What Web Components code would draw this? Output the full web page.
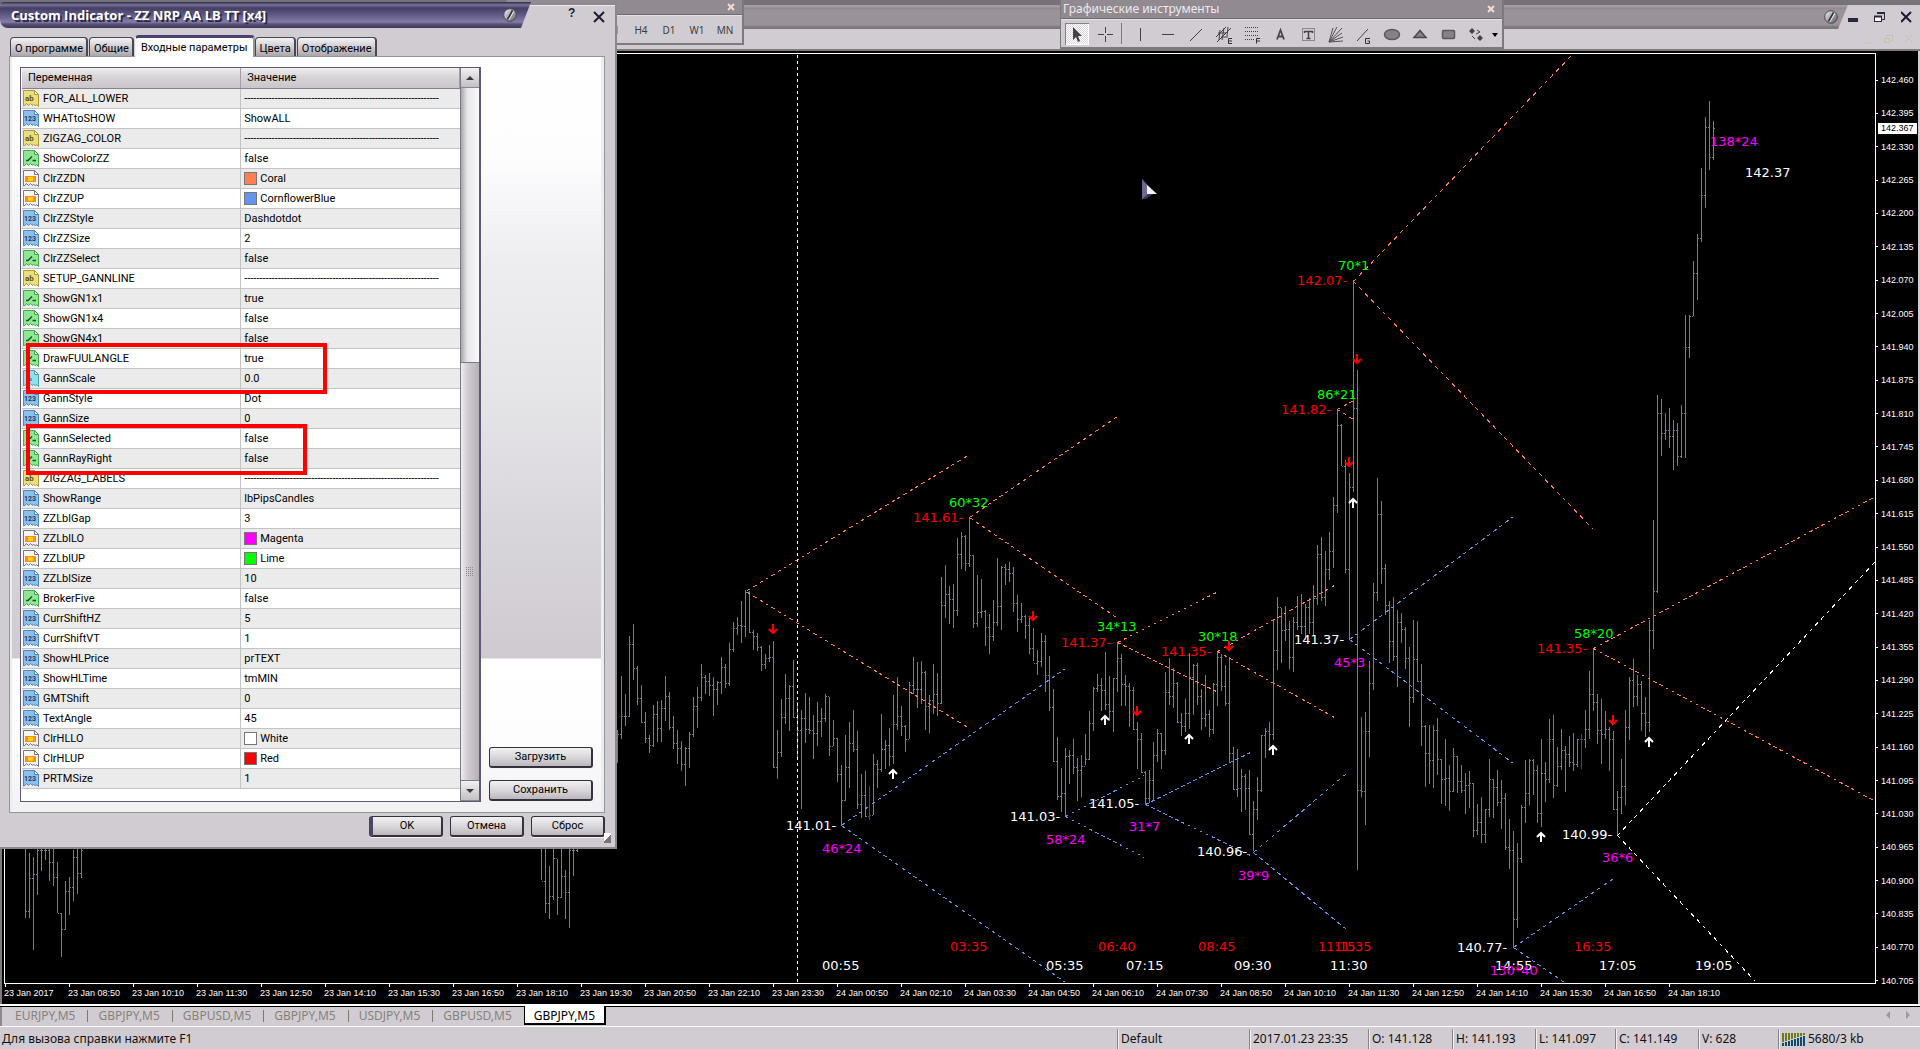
<!DOCTYPE html>
<html lang="ru">
<head>
<meta charset="utf-8">
<title>GBPJPY,M5</title>
<style>
  html, body { margin: 0; height: 100%; background: #d1ccd2; }
  body { font-family: "Noto Sans", "Open Sans", sans-serif; font-size: 12px; color: #111; overflow: hidden; }
</style>
</head>
<body>
<terminal-window></terminal-window>

<script>
const define = (name, html, setup) => {
  const tpl = document.createElement('template');
  tpl.innerHTML = html;
  customElements.define(name, class extends HTMLElement {
    constructor() {
      super();
      this.attachShadow({ mode: 'open' }).append(tpl.content.cloneNode(true));
    }
    connectedCallback() {
      if (this.ready) return;
      this.ready = true;
      if (setup) setup(this.shadowRoot, this);
    }
  });
};

/* ---------- small round knob used by the title bars ---------- */
define('skin-knob', `
<style>:host{display:block;width:14px;height:14px}svg{display:block}</style>
<svg width="14" height="14" viewBox="0 0 14 14">
  <defs><linearGradient id="g" x1="0" y1="0" x2="1" y2="1"><stop offset="0" stop-color="#f4f4f4"/><stop offset=".5" stop-color="#a9a9ad"/><stop offset="1" stop-color="#55555c"/></linearGradient></defs>
  <circle cx="7" cy="7" r="6.3" fill="url(#g)" stroke="#4a4758"/>
  <path d="M4.5 11.5 9.5 2.5" stroke="#33303c" stroke-width="1.6"/><path d="M5.8 12 10.8 3.2" stroke="#fff" stroke-width=".8"/>
</svg>`);

/* ---------- main window title bar ---------- */
define('main-caption', `
<style>
:host{display:block;background:#d1ccd2;border-bottom:2px solid #7d7a78}
.top{height:5px;background:#757379}
.bar{display:flex;height:24px}
.fill{flex:1;display:flex;justify-content:flex-end;align-items:center;padding-right:10px;box-sizing:border-box;
 background:linear-gradient(#a39da3 0 2px,#8f898f 3px,#9a949a 5px,#999399 20px,#7b777b 22px 24px);
 clip-path:polygon(0 0,100% 0,calc(100% - 10px) 100%,0 100%)}
.ctl{display:flex;width:72px;gap:11px;align-items:center}
button{all:unset;width:16px;height:18px;display:block}
.ctl button:first-child{width:15px}
svg{display:block}
.mdi{display:flex;justify-content:flex-end;gap:3px;height:20px;align-items:center;padding-right:1px}
</style>
<div class="top"></div>
<div class="bar">
  <div class="fill"><skin-knob></skin-knob></div>
  <div class="ctl">
    <button aria-label="Свернуть"><svg width="15" height="18"><rect x="0" y="10" width="10" height="4" fill="#2a2740"/></svg></button>
    <button aria-label="Восстановить"><svg width="16" height="18" fill="none" stroke="#2a2740"><path d="M3.5 6V4.5h7v7H8" /><path d="M3 5h8" stroke-width="2"/><rect x=".5" y="8.5" width="7" height="5" fill="#fff"/><path d="M0 8.5h8" stroke-width="2"/></svg></button>
    <button aria-label="Закрыть"><svg width="16" height="18"><path d="M0 4 10 14M10 4 0 14" stroke="#1e1b33" stroke-width="2"/></svg></button>
  </div>
</div>
<div class="mdi">
  <button aria-label="Свернуть окно"><svg width="16" height="18"><path d="M0 13h7" stroke="#c3c3ac" stroke-width="1"/></svg></button>
  <button aria-label="Восстановить окно"><svg width="16" height="18" fill="none" stroke="#c3c3ac"><path d="M2.500 8V5.500h6v5H6"/><rect x=".5" y="8.500" width="5" height="4"/></svg></button>
  <button aria-label="Закрыть окно"><svg width="16" height="18"><path d="M2 5 9 12M9 5 2 12" stroke="#c3c3ac"/></svg></button>
</div>`);

/* ---------- floating toolbar frame ---------- */
define('tool-frame', `
<style>
:host{display:block;box-sizing:border-box;background:#d1ccd2;border:solid #7d797d;border-width:0 2px 2px 1px}
header{display:flex;align-items:center;justify-content:space-between;height:var(--cap,18px);padding:0 7px 0 2px;background:#918b91;border-bottom:1px solid #6f6b70;color:#eeeaee;font-size:12px;line-height:16px;white-space:nowrap}
button{all:unset;display:block;width:8px;height:8px}
svg{display:block}
.body{display:flex;align-items:center;border-top:1px solid #e4e1e5;box-sizing:border-box}
</style>
<header><span><slot name="title"></slot></span><button aria-label="Закрыть"><svg width="8" height="8"><path d="M1 1 7 7M7 1 1 7" stroke="#f6d9d6" stroke-width="2"/></svg></button></header>
<div class="body"><slot></slot></div>`);

/* ---------- timeframe buttons ---------- */
define('period-bar', `
<style>
:host{display:block}
tool-frame{--cap:14px}
.row{display:flex;justify-content:flex-end;width:235px;height:27px;align-items:center;padding-right:3px;box-sizing:border-box}
button{all:unset;width:28px;text-align:center;font-size:10px;color:#3f3d40}
</style>
<tool-frame><div class="row"><button>M30</button><button>H1</button><button>H4</button><button>D1</button><button>W1</button><button>MN</button></div></tool-frame>`);

/* ---------- drawing tools ---------- */
const TOOLS = [
 ['Курсор', '<path d="M8 4v13l3-3 2 5 2-1-2-5h4z" fill="#444146"/>', 'on'],
 ['Перекрестие', '<path d="M12.500 4v6M12.500 13v6M5 11.500h6M14 11.500h6" stroke="#444146"/>', 'cross'],
 ['Вертикальная линия', '<path d="M12.500 5v13" stroke="#444146"/>'],
 ['Горизонтальная линия', '<path d="M6 11.500h12" stroke="#444146"/>'],
 ['Трендовая линия', '<path d="M6 18 18 6" stroke="#444146"/>'],
 ['Канал', '<path d="M4 14 14 4M5 19 19 5M8 7l-1 10M12 5l-2 12M16 4l-1 9M6 10h8M9 14h7" stroke="#444146" fill="none"/><path d="M20 15.500h-3.500v5H20M17 18h3" stroke="#333" fill="none"/>'],
 ['Фибоначчи', '<path d="M5 4.500h14M5 8.500h14M5 12.500h14M5 16.500h9" stroke="#444146" stroke-dasharray="1 1"/><path d="M20 15.500h-3.500v5M17 18h3" stroke="#333" fill="none"/>'],
 ['Текст', '<path d="M9 16.500 12.500 7l3.500 9.500M10 13.500h5" stroke="#4a474c" stroke-width="1.800" fill="none"/>'],
 ['Метка', '<rect x="6.500" y="5.500" width="12" height="12" fill="none" stroke="#444146" stroke-dasharray="1 1"/><path d="M8.500 8.500h8M12.500 8v8M8.500 8v2M16.500 8v2M10.500 15.500h4" stroke="#444146" stroke-width="1.500"/>'],
 ['Веер', '<path d="M5 19 9 5M5 19 13 4M5 19 18 5M5 19l13-9M5 19l14-5M5 19l14-1" stroke="#555257"/>'],
 ['Ганн', '<path d="M5 18 16 6" stroke="#444146"/><path d="M18 15.500h-4.500v5h4V18h-2" stroke="#333" fill="none"/>'],
 ['Эллипс', '<ellipse cx="12" cy="11.500" rx="7.500" ry="5" fill="#858187" stroke="#5a575c" stroke-width="1.500"/>'],
 ['Треугольник', '<path d="M12 7.500 18 14.500H6z" fill="#858187" stroke="#4b484d" stroke-width="1.500"/>'],
 ['Прямоугольник', '<rect x="6.500" y="7.500" width="12" height="8" rx="1" fill="#858187" stroke="#5a575c" stroke-width="1.500"/>'],
 ['Стрелки', '<path d="M5 8 8 5 11 8 8 11zM13 15l3-3 3 3-3 3z" fill="#444146"/><path d="M8 13l3 3M13 7l3 2-4 2" stroke="#444146" fill="none"/>'],
];
define('drawing-tools', `
<style>
:host{display:block}
.row{display:flex;align-items:center;gap:4px;height:27px;width:441px;padding:0 4px;box-sizing:border-box}
button{all:unset;box-sizing:border-box;width:24px;height:22px;display:flex;flex:none}
.on{box-shadow:inset 1px 1px #858187,inset -1px -1px #fff;background:repeating-conic-gradient(#fff 0 25%,#d9d5da 0 50%) 0 0/2px 2px}
i{width:1px;height:21px;background:#7c787d;margin-right:2px}
</style>
<tool-frame><span slot="title">Графические инструменты</span><div class="row"></div></tool-frame>`, root => {
  root.querySelector('.row').innerHTML = TOOLS.map(([label, art, c]) =>
    `<button class="${c || ''}" aria-label="${label}"><svg width="24" height="22">${art}</svg></button>` + (c === 'cross' ? '<i></i>' : '')).join('') +
    '<svg width="6" height="22"><path d="M0 10h6l-3 4z" fill="#000"/></svg>';
});

/* ---------- chart ----------
   Bars stand 4px apart. Each segment has its first x, a base y, and
   high/low/close triples in thirds of a pixel below that base. */
const SEGMENTS = [
 [25, 620, '640 896 875 699 896 774 711 990 763 640 825 690 640 755 690 640 722 690 640 785 728 650 800 771 726 880 880 880 1013 928 783 930 813 771 885 803 690 843 712 660 822 760 640 776 690'],
 [541, 620, '640 782 783 660 881 850 738 899 829 650 840 716 717 887 831 650 834 768 750 899 816 640 926 690 640 768 690 640 696 680'],
 [617, 400, '990 1090 1003 828 1017 948 882 980 948 708 951 733 672 842 805 800 917 894 855 970 968 936 1031 1015 1005 1061 1035 915 1043 942 903 1026 986 900 1028 924 828 963 888 876 990 982 948 1048 1030 990 1094 1046 1025 1115 1092 1041 1160 1046 996 1106 1003 891 1013 918 861 984 891 792 903 832 825 884 843 820 888 856 831 950 868 843 917 847 771 884 801 792 866 850 729 860 748 666 758 685 651 706 676 603 731 679 570 713 577 573 700 696 690 752 709 699 754 742 738 815 793 762 809 775 735 788 772 723 1104 1102 990 1139 1057 897 1073 951 822 974 895 855 995 858 780 955 951 907 1082 990 930 1229 955 879 1031 988 891 1004 990 945 1079 999 906 1040 963 924 1013 954 882 967 890 891 1068 1040 960 1040 1015 1015 1148 1124 1096 1278 1202 1005 1204 1102 968 1166 1030 930 1056 1048 993 1227 1213 1122 1256 1185 1113 1253 1250 1158 1262 1247 1062 1247 1092 1080 1166 1108 942 1118 1048 1020 1109 1035 984 1098 1068 885 1092 974 831 992 948 918 1010 978 975 1056 1019 847 1019 856 771 884 868 786 924 868 783 912 818 813 990 918 885 1001 900 792 942 883 819 950 910 531 914 616 495 656 583 558 674 597 552 686 631 414 650 462 396 507 409 405 515 490 351 501 465 465 686 670 525 683 636 538 656 633 630 738 682 642 762 709 600 725 667 474 680 619 498 692 501 492 557 507 486 546 520 501 638 610 585 698 658 609 671 648 645 719 676 654 762 745 684 785 790 750 827 785 700 803 724 706 876 826 768 935 922 868 1088 1085 1011 1202 1189 1104 1238 1180'],
 [1065, 560, '564 770 588 570 674 586 537 643 622 594 725 631 585 712 618 522 616 597 453 600 490 381 515 385 342 398 376 354 455 390 276 450 432 348 485 453 354 516 356 246 398 295 282 440 374 345 440 379 369 502 391 381 510 507 486 627 538 519 640 637 633 732 716 630 730 660 546 720 586 507 606 519 519 629 571 336 585 396 294 437 409 324 446 370 366 490 487 459 530 498 417 516 460 279 507 351 312 467 316 309 437 410 387 510 474 345 502 463 450 533 508 369 522 373 273 440 291 282 395 378 315 440 430 291 608 580 561 690 687 567 711 685 627 758 648 642 752 685 630 827 824 723 875 747 651 780 691 525 698 526 504 594 514 486 571 522 180 540 271 111 330 143 144 309 211 138 245 207 183 329 291 171 336 187 108 210 198 102 222 198 132 240 143 114 222 187 75 230 115'],
 [1317, 220, '975 1155 1003 951 1145 1132 993 1158 1047 936 1082 994 831 1044 856 567 879 615 612 740 739 720 1059 1048 759 1258 802 180 818 565 450 1950 1710 1491 1731 1714 1476 1815 1534 1323 1611 1390 1089 1410 1117 774 1143 883 843 1092 1044 1032 1185 1157 1144 1329 1264 1131 1323 1309 1170 1401 1207 1179 1269 1228 1221 1347 1315 1281 1521 1432 1200 1449 1318 1203 1386 1384'],
 [1421, 640, '72 318 260 255 441 340 255 432 361 255 444 271 234 405 358 358 492 417 297 498 415 375 513 455 324 456 349 349 459 423 375 459 451 399 522 437 393 504 430 430 591 571 492 585 547 471 609 583 507 609 508 357 531 418 417 534 443 390 498 487 420 567 475 459 630 622 537 687 632 573 922 838 609 864 655 495 669 501'],
 [1525, 560, '600 789 700 597 735 601 598 705 631 615 790 760 537 801 640 606 726 658 477 669 538 465 714 676 561 682 618 507 630 571 558 696 583 528 621 606 519 633 613 537 621 538 522 627 538 450 564 507 333 537 404 264 453 427 402 552 510 417 612 523 453 537 508 501 633 538 513 750 747 693 825 712 597 762 679 450 735 502 351 540 361 297 441 409 345 438 373 363 513 460 411 531 487 180 516 211'],
 [1653, 0, '1560 1947 1775 1185 1779 1240 1197 1368 1300 1240 1320 1290 1225 1345 1310 1260 1410 1290 1270 1400 1370 1215 1375 1240 945 1375 1042 945 1074 949 783 950 821 702 900 715 504 726 586 351 624 382 303 510 472 363 480 385'],
];
const MARKED = [869, 1581];
const CORAL = '#ff7f50', BLUE = '#6495ed', WHITE = '#ffffff';
const RAYS = [
 [CORAL, '747 590 969 454;747 592 969 728;969 517 1117 416;969 517 1116 617;1117 642 1216 592;1117 642 1216 691;1217 651 1334 585;1217 651 1334 717;1337 409 1353 400;1337 409 1353 419;1353 281 1572 54;1353 281 1593 529;1593 648 1875 496;1593 648 1875 801'],
 [BLUE, '841 825 1065 668;841 825 1065 982;1065 816 1144 775;1065 816 1144 857;1145 804 1250 752;1145 804 1250 855;1253 852 1346 773;1253 852 1346 929;1349 639 1513 516;1349 639 1513 763;1513 947 1616 876;1513 947 1564 982'],
 [WHITE, '1617 835 1875 561;1617 835 1755 981;797 54 797 983'],
];
const LABELS = [
 ['#ff0000', '142.07- 1297 285;141.82- 1281 414;141.61- 913 522;141.37- 1061 647;141.35- 1161 656;141.35- 1537 653;03:35 950 951;06:40 1098 951;08:45 1198 951;11:15 1318 951;11:35 1334 951;16:35 1574 951'],
 ['#00ff00', '70*1 1338 270;86*21 1317 399;60*32 949 507;34*13 1097 631;30*18 1198 641;58*20 1574 638'],
 ['#ffffff', '141.37- 1294 644;141.01- 786 830;141.03- 1010 821;141.05- 1089 808;140.96- 1197 856;140.99- 1562 839;140.77- 1457 952;142.37 1745 177;00:55 822 970;05:35 1046 970;07:15 1126 970;09:30 1234 970;11:30 1330 970;14:55 1495 970;17:05 1599 970;19:05 1695 970'],
 ['#ff00ff', '45*3 1334 667;46*24 822 853;58*24 1046 844;31*7 1129 831;39*9 1238 880;36*6 1602 862;130*40 1490 975;138*24 1710 146'],
];
const DOWN = [[773,629],[1033,616],[1137,711],[1229,646],[1357,359],[1349,462],[1613,720]];
const UP = [[893,774],[1105,720],[1189,739],[1273,750],[1353,503],[1541,837],[1649,742]];

define('price-plot', `
<style>
:host{display:block;border:1px solid #fff;overflow:hidden;min-width:0;min-height:0}
svg{display:block;width:100%;height:100%}
text{font:13px "DejaVu Sans",Verdana,sans-serif}
</style>
<svg viewBox="5 54 1870 929" preserveAspectRatio="none"></svg>`, root => {
  let out = '';
  let bars = '', marked = '', last = null;
  for (const [x0, base, data] of SEGMENTS) {
    const v = data.split(' ').map(n => base + Math.floor(n / 3));
    for (let i = 0; i < v.length; i += 3) {
      const x = x0 + i / 3 * 4, [h, l, c] = v.slice(i, i + 3);
      let d = `M${x} ${h}h1V${l}h-1z`;
      d += `M${x + 1} ${c}h1v1h-1z`;
      if (last && last[0] === x - 4) d += `M${x - 1} ${last[1]}h1v1h-1z`;
      if (MARKED.includes(x)) marked += d; else bars += d;
      last = [x, c];
    }
  }
  out += `<path d="${bars}" fill="#708090" shape-rendering="crispEdges"/><path d="${marked}" fill="#483d8b" shape-rendering="crispEdges"/>`;
  for (const [color, list] of RAYS) for (const item of list.split(';')) {
    const [x1, y1, x2, y2] = item.split(' ').map(Number);
    const dx = Math.abs(x2 - x1), dy = Math.abs(y2 - y1);
    const dash = 3 * Math.hypot(dx, dy) / Math.max(dx, dy);
    out += `<path d="M${x1 + .5} ${y1 + .5}L${x2 + .5} ${y2 + .5}" stroke="${color}" stroke-dasharray="${dash}" shape-rendering="crispEdges"/>`;
  }
  for (const [color, list] of LABELS) for (const item of list.split(';')) {
    const [t, x, y] = item.split(' ');
    out += `<text x="${x}" y="${y}" fill="${color}">${t}</text>`;
  }
  for (const [x, y] of DOWN) out += `<path d="M${x} ${y - 5}v9M${x - 4} ${y}l4 4 4-4" fill="none" stroke="#ff0000" stroke-width="2"/>`;
  for (const [x, y] of UP) out += `<path d="M${x} ${y + 5}v-9M${x - 4} ${y}l4-4 4 4" fill="none" stroke="#fff" stroke-width="2"/>`;
  out += `<path d="M1142 179l15 15h-4l-7 5h-4z" fill="#3d3858"/><path d="M1142 179l5 6v10l-5 4z" fill="#6d6690"/><path d="M1147 185l10 9h-10z" fill="#f4f2fa"/>`;
  root.querySelector('svg').innerHTML = out;
});

define('price-axis', `
<style>
:host{display:flex;flex-direction:column;justify-content:space-between;position:relative;padding:21px 0 17px;box-sizing:border-box;color:#fff;font:9px/12px "Liberation Sans",Arial,sans-serif}
div{display:flex;align-items:center;gap:3px}
div::before{content:"";width:2px;height:1px;background:#fff}
output{position:absolute;left:2px;top:70px;width:36px;padding-left:3px;line-height:11px;background:#fff;color:#000}
</style>`, root => {
  for (let i = 0; i < 28; i++) {
    const d = document.createElement('div');
    d.textContent = (142.46 - i * .065).toFixed(3);
    root.append(d);
  }
  const o = document.createElement('output');
  o.textContent = '142.367';
  root.append(o);
});

define('time-axis', `
<style>
:host{display:flex;color:#fff;font:9px/12px "Liberation Sans",Arial,sans-serif;overflow:hidden}
div{flex:0 0 64px;white-space:nowrap}
div::before{content:"";display:block;width:1px;height:3px;margin-left:1px;background:#fff}
</style>`, root => {
  for (let i = 0, m = 450; i < 27; i++, m += 80) {
    const d = document.createElement('div');
    const hh = String(Math.floor(m / 60) % 24).padStart(2, '0'), mm = String(m % 60).padStart(2, '0');
    d.textContent = i ? `${m < 1440 ? 23 : 24} Jan ${hh}:${mm}` : '23 Jan 2017';
    root.append(d);
  }
});

define('price-chart', `
<style>
:host{display:grid;grid-template:minmax(0,1fr) 20px / minmax(0,1fr) 42px;background:#000;border:solid #d1ccd2;border-width:0 2px 0 0;box-shadow:inset 2px 0 #7d7a78;padding:2px 0 0 4px}
price-axis{grid-row:1/3;grid-column:2}
</style>
<price-plot></price-plot><price-axis></price-axis><time-axis></time-axis>`);

/* ---------- chart tabs ---------- */
define('chart-tabs', `
<style>
:host{display:flex;align-items:flex-start;height:20px;border-top:2px solid #fff;background:#d1ccd2;box-shadow:inset 0 1px #000,inset 2px 0 #8d898e;border-bottom:1px solid #fff;padding:0 0 0 5px}
button{all:unset;box-sizing:border-box;height:18px;padding:0 12px 0 10px;line-height:20px;font-size:12px;color:#85827a}
button+button{padding-left:11px;background:linear-gradient(#7b7870,#7b7870) 0 4px/1px 12px no-repeat}
button.on{background:#fff;color:#000;border:1px solid #000;border-width:0 2px 2px 1px;height:19px;padding:0 9px}
.sp{flex:1}
svg{margin:3px 6px 0 0}
</style>
<button>EURJPY,M5</button><button>GBPJPY,M5</button><button>GBPUSD,M5</button><button>GBPJPY,M5</button><button>USDJPY,M5</button><button>GBPUSD,M5</button><button class="on">GBPJPY,M5</button>
<span class="sp"></span><svg width="28" height="12"><path d="M4 2v8L0 6zM20 2v8l4-4z" fill="#9c989d"/></svg>`);

/* ---------- status bar ---------- */
define('status-bar', `
<style>
:host{display:grid;grid-template-columns:1fr 132px 119px 84px 83px 80px 83px 80px 142px;height:22px;align-items:end;line-height:20px;white-space:nowrap;background:#d1ccd2}
span{padding-left:2px}
span+span{padding-left:3px;border-left:1px solid #88848a;box-shadow:inset 1px 0 #f2f0f3}
.net{display:flex;align-items:center;gap:3px}
</style>
<span>Для вызова справки нажмите F1</span><span>Default</span><span>2017.01.23 23:35</span><span>O: 141.128</span><span>H: 141.193</span><span>L: 141.097</span><span>C: 141.149</span><span>V: 628</span>
<span class="net"><svg width="23" height="13"></svg>5680/3 kb</span>`, root => {
  let s = '';
  for (let i = 0; i < 8; i++) {
    const split = 9 - i;
    s += `<rect x="${i * 3}" y="0" width="2" height="${split}" fill="#6b7d1a"/><rect x="${i * 3}" y="${split + 1}" width="2" height="${12 - split}" fill="#12486b"/>`;
  }
  root.querySelector('svg').innerHTML = s;
});

/* ---------- dialog parts ---------- */
define('skin-button', `
<style>
:host{display:block}
button{all:unset;box-sizing:border-box;width:100%;height:21px;border:2px solid #35323d;border-width:1px 2px 2px 1px;border-radius:3px;text-align:center;line-height:18px;background:linear-gradient(#f1f0f2,#d5d2d6 60%,#bbb7bc);box-shadow:0 1px #f3f1f4}
:host([primary]) button{border-left:4px solid #4a4663}
</style>
<button type="button"><slot></slot></button>`);

const DOC = (fill, edge, art) => `<svg width="16" height="17"><path d="M.5.500h11l4 4v12l-2-2-1 1.500-2-2-1 1.500-2-2-2 2-2-2-1 1.500L.500 16z" fill="${fill}" stroke="${edge}"/><path d="M11.500.500v4h4z" fill="#fff" stroke="${edge}"/>${art}</svg>`;
const ICONS = {
  s: DOC('#eadf7f', '#b09a35', '<text x="2" y="11" font-size="8" font-weight="700" fill="#5f4f10">ab</text>'),
  i: DOC('#8fc0ec', '#4f88bd', '<text x="1" y="11" font-size="7" font-weight="700" fill="#123f6e">123</text>'),
  b: DOC('#8fe695', '#45a94e', '<path d="M3 10.500h2l4-4M9.500 10.500H13" stroke="#145a1b" stroke-width="1.500" fill="none"/>'),
  d: DOC('#93e0ec', '#45a5b5', '<text x="3" y="11" font-size="8" font-weight="700" fill="#12606e">½</text>'),
  c: DOC('#f5f5f5', '#77747a', '<rect x="2" y="6" width="11" height="6" fill="#ff8c1a"/><rect x="5" y="7" width="5" height="4" fill="#ffd21a"/>'),
};
const DASH = '-'.repeat(64);
const PARAMS = `s FOR_ALL_LOWER ${DASH}
i WHATtoSHOW ShowALL
s ZIGZAG_COLOR ${DASH}
b ShowColorZZ false
c ClrZZDN Coral #ff7f50
c ClrZZUP CornflowerBlue #6495ed
i ClrZZStyle Dashdotdot
i ClrZZSize 2
b ClrZZSelect false
s SETUP_GANNLINE ${DASH}
b ShowGN1x1 true
b ShowGN1x4 false
b ShowGN4x1 false
b DrawFUULANGLE true
d GannScale 0.0
i GannStyle Dot
i GannSize 0
b GannSelected false
b GannRayRight false
s ZIGZAG_LABELS ${DASH}
i ShowRange lbPipsCandles
i ZZLblGap 3
c ZZLblLO Magenta #ff00ff
c ZZLblUP Lime #00ff00
i ZZLblSize 10
b BrokerFive false
i CurrShiftHZ 5
i CurrShiftVT 1
i ShowHLPrice prTEXT
i ShowHLTime tmMIN
i GMTShift 0
i TextAngle 45
c ClrHLLO White #ffffff
c ClrHLUP Red #ff0000
i PRTMSize 1`.split('\n').map(r => r.split(' '));

define('param-table', `
<style>
:host{display:grid;grid-template-columns:minmax(0,1fr) 19px;position:relative;border:1px solid #5d5875;border-right-width:2px;background:#fff;padding-left:1px}
table{border-collapse:collapse;table-layout:fixed;width:100%;margin-bottom:12px}
th{height:20px;padding:0 0 0 6px;text-align:left;font-weight:400;background:linear-gradient(#f0eff1,#d9d6da 40%,#c9c5ca);border-bottom:1px solid #87838c;border-right:1px solid #a39fa6}
td{height:19px;padding:0;border-bottom:1px solid #c3c3c3;white-space:nowrap;overflow:hidden;line-height:14px}
tr:nth-child(odd) td{background:#ebebeb}
td:first-child{border-right:1px solid #c3c3c3}
td>div{display:flex;align-items:center;height:19px}
.n{gap:4px;padding-left:1px}
.v{gap:3px;padding-left:3px}
svg{display:block;flex:none}
b{width:11px;height:11px;border:1px solid #77747a}
.bar{display:flex;flex-direction:column;background:linear-gradient(90deg,#a9a5aa,#e7e5e8 6px,#fafafa);border-left:1px solid #7d7a86}
.bar button{all:unset;height:19px;background:linear-gradient(#f1f0f2,#c4c0c5);border-bottom:1px solid #8a868f}
.bar svg{margin:6px 5px}
.track{flex:275}
.thumb{flex:418;border:1px solid #7d7a86;border-width:1px 0;background:linear-gradient(90deg,#edecee,#cfcbd0 40%,#b4b0b6);display:flex;align-items:center;justify-content:center}
.thumb svg{margin:0}
.mark{position:absolute;left:5px;border:4px solid #ff0000;box-sizing:border-box;height:51px}
.one{top:275px;width:301px}
.two{top:356px;width:281px}
</style>
<table><thead><tr><th>Переменная</th><th>Значение</th></tr></thead><tbody></tbody></table>
<div class="bar">
  <button aria-label="Вверх"><svg width="8" height="6"><path d="M0 5h8L4 1z" fill="#3a3744"/></svg></button>
  <div class="track"></div>
  <div class="thumb"><svg width="8" height="9"><path d="M0 .5h8M0 2.500h8M0 4.500h8M0 6.500h8M0 8.500h8" stroke="#8d8993" stroke-dasharray="1 1"/></svg></div>
  <button aria-label="Вниз"><svg width="8" height="6"><path d="M0 1h8L4 5z" fill="#3a3744"/></svg></button>
</div>
<div class="mark one"></div><div class="mark two"></div>`, root => {
  root.querySelector('tbody').innerHTML = PARAMS.map(([t, n, v, c]) =>
    `<tr><td><div class="n">${ICONS[t]}${n}</div></td><td><div class="v">${c ? `<b style="background:${c}"></b>` : ''}${v}</div></td></tr>`).join('');
});

define('indicator-dialog', `
<style>
:host{display:block;width:617px;box-sizing:border-box;background:#d1ccd2;border:solid #8a888c;border-width:1px 2px 2px 0;box-shadow:inset 0 1px #eceaed;font:11px/14px Roboto,"Liberation Sans",sans-serif;color:#000}
header{display:flex;align-items:flex-start;margin-top:-3px}
h1{margin:0;width:531px;height:26px;box-sizing:border-box;display:flex;align-items:center;justify-content:space-between;padding:0 14px 0 11px;color:#fff;font:bold 13px/22px "Open Sans","Noto Sans",sans-serif;text-shadow:2px 2px #2c2844;
 background:linear-gradient(#2e2a44,#7a739c 3px,#474062 6px,#5c5580 12px,#857da8 20px,#5a5378 22px,#3c3756);
 border-radius:4px 0 0 8px;clip-path:polygon(0 0,100% 0,calc(100% - 10px) 100%,0 100%)}
header button{all:unset;color:#1e1b33}
.q{margin:4px 0 0 37px;width:25px;font:bold 12px/14px "Liberation Sans",sans-serif}
.x svg{display:block;margin-top:9px}
nav{display:flex;align-items:flex-end;padding:8px 0 0 10px;height:21px;margin-bottom:-1px;position:relative}
nav button{all:unset;box-sizing:border-box;height:19px;padding:0 3px 0 4px;line-height:22px;border:1px solid #4a464f;border-width:1px 2px 0 1px;border-radius:4px 4px 0 0;background:linear-gradient(#f3f2f4,#c9c5ca 60%,#aaa6ab);white-space:nowrap;margin:0 1px 1px 0;text-align:center;flex:none}
nav .on{height:22px;margin:0;border-top:3px solid #4a4370;background:#fdfdfe;border-color:#4a4370 #8f999b #fff #f5f5f5;padding:0 5px;line-height:20px}
.panel{display:flex;align-items:flex-end;gap:8px;margin:0 10px 0 9px;padding:10px 11px 10px 10px;border:1px solid #8f999b;box-shadow:inset 2px 0 #eceeee,inset -3px 0 #eceeee;
 background:linear-gradient(#fff 0,#fdfdfe 100px,#eeeef1 200px,#e6e5e8 330px,#d8d5da 480px,#cfcad0 601px,#fff 602px,#fdfdfe 680px,#f1f0f3)}
param-table{flex:1}
.side{width:104px;display:flex;flex-direction:column;gap:12px;padding-bottom:1px}
footer{display:flex;justify-content:flex-end;align-items:flex-start;gap:7px;padding:3px 10px 10px 0;position:relative}
footer skin-button{width:74px}
.grip{position:absolute;right:4px;bottom:4px;width:7px;height:10px;background:linear-gradient(135deg,#fff 0 50%,#77737a 50%)}
</style>
<header><h1>Custom Indicator - ZZ NRP AA LB TT [x4]<skin-knob></skin-knob></h1>
<button class="q" aria-label="Справка">?</button>
<button class="x" aria-label="Закрыть"><svg width="12" height="12"><path d="M1 1 11 11M11 1 1 11" stroke="#1e1b33" stroke-width="2"/></svg></button></header>
<nav><button>О программе</button><button>Общие</button><button class="on">Входные параметры</button><button>Цвета</button><button>Отображение</button></nav>
<div class="panel"><param-table></param-table><div class="side"><skin-button>Загрузить</skin-button><skin-button>Сохранить</skin-button></div></div>
<footer><skin-button primary>OK</skin-button><skin-button>Отмена</skin-button><skin-button>Сброс</skin-button><span class="grip"></span></footer>`);

/* ---------- whole window; toolbars and dialog float over it ---------- */
define('terminal-window', `
<style>
:host{display:flex;flex-direction:column;height:100vh;position:relative;overflow:hidden}
price-chart{flex:1;min-height:0}
.float{position:absolute;top:0}
period-bar{right:1176px}
drawing-tools{left:1060px}
indicator-dialog.float{left:0;top:4px}
</style>
<main-caption></main-caption>
<price-chart></price-chart>
<chart-tabs></chart-tabs>
<status-bar></status-bar>
<period-bar class="float"></period-bar>
<drawing-tools class="float"></drawing-tools>
<indicator-dialog class="float"></indicator-dialog>`);
</script>
</body>
</html>
